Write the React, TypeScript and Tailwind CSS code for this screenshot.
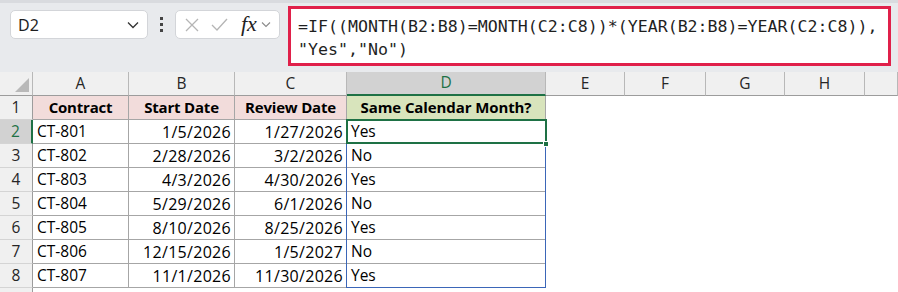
import React from "react";

const rows = [
  ["CT-801", "1/5/2026", "1/27/2026", "Yes"],
  ["CT-802", "2/28/2026", "3/2/2026", "No"],
  ["CT-803", "4/3/2026", "4/30/2026", "Yes"],
  ["CT-804", "5/29/2026", "6/1/2026", "No"],
  ["CT-805", "8/10/2026", "8/25/2026", "Yes"],
  ["CT-806", "12/15/2026", "1/5/2027", "No"],
  ["CT-807", "11/1/2026", "11/30/2026", "Yes"],
];

const cols = ["A", "B", "C", "D", "E", "F", "G", "H", ""];

const cellFont = { fontFamily: "'Open Sans', Lato, sans-serif" };

export default function App() {
  return (
    <div className="w-[898px] h-[292px] overflow-hidden bg-white relative" style={cellFont}>
      {/* Toolbar */}
      <div className="h-[72px] bg-[#e8eaed] border-t-[3px] border-[#d9dbdf] relative">
        <div className="flex items-start pt-[7px] pl-[10px]">
          {/* Name box */}
          <div className="w-[138px] h-[29px] bg-white border border-[#d3d5d9] rounded-[5px] flex items-center justify-between pl-[7px] pr-[8px]">
            <span className="text-[16px] text-[#1f1f1f]" style={{ fontFamily: "'Noto Sans', sans-serif" }}>D2</span>
            <svg width="12" height="8" viewBox="0 0 12 8"><path d="M1 1.5 L6 6.5 L11 1.5" fill="none" stroke="#333" strokeWidth="1.3" /></svg>
          </div>
          {/* dots */}
          <div className="w-[27px] h-[29px] flex flex-col items-center justify-center gap-[3px]">
            <div className="w-[3px] h-[3px] bg-[#444]" />
            <div className="w-[3px] h-[3px] bg-[#444]" />
            <div className="w-[3px] h-[3px] bg-[#444]" />
          </div>
          {/* fx box */}
          <div className="w-[105px] h-[29px] bg-white border border-[#d3d5d9] rounded-[5px] flex items-center pl-[9px]">
            <svg width="14" height="14" viewBox="0 0 14 14"><path d="M1 1 L13 13 M13 1 L1 13" stroke="#b5b5b5" strokeWidth="1.3" /></svg>
            <svg width="17" height="13" viewBox="0 0 17 13" className="ml-[12px]"><path d="M1 7 L6 12 L16 1" fill="none" stroke="#b5b5b5" strokeWidth="1.3" /></svg>
            <span className="ml-[13px] text-[22px] italic text-[#222] leading-none -mt-[2px]" style={{ fontFamily: "'Liberation Serif', serif" }}>fx</span>
            <svg width="10" height="7" viewBox="0 0 10 7" className="ml-[4px]"><path d="M1 1.5 L5 5.5 L9 1.5" fill="none" stroke="#8a8a8a" strokeWidth="1.1" /></svg>
          </div>
          {/* formula box */}
          <div className="ml-[8px] -mt-[4px] w-[603px] h-[60px] bg-white border-[3px] border-[#e0204a] pl-[7px] pt-[6px]">
            <div className="text-[16.6px] leading-[23px] text-[#1f1f1f] whitespace-pre" style={{ fontFamily: "'DejaVu Sans Mono', 'Liberation Mono', monospace" }}>
              {'=IF((MONTH(B2:B8)=MONTH(C2:C8))*(YEAR(B2:B8)=YEAR(C2:C8)),\n"Yes","No")'}
            </div>
          </div>
        </div>
      </div>

      {/* Grid */}
      <div className="grid grid-cols-[33px_96px_106px_112px_199px_79px_81px_79px_80px_1fr] relative">
        {/* header row */}
        <div className="h-[24px] bg-[#f0f0f0] border-r border-b border-r-[#b8b8b8] border-b-[#9c9c9c] relative overflow-hidden">
          <div className="absolute right-[3px] bottom-[3px] w-0 h-0 border-l-[14px] border-l-transparent border-b-[14px] border-b-[#b9b9b9]" />
        </div>
        {cols.map((c, i) =>
          c === "D" ? (
            <div key={i} className="h-[24px] bg-[#d2d2d2] border-r border-r-[#b8b8b8] border-b-2 border-b-[#1e7145] flex items-center justify-center text-[15.5px] text-[#1e7145]">
              {c}
            </div>
          ) : (
            <div key={i} className="h-[24px] bg-[#f0f0f0] border-r border-b border-r-[#b8b8b8] border-b-[#9c9c9c] flex items-center justify-center text-[15.5px] text-[#262626]">
              {c}
            </div>
          )
        )}

        {/* row 1 */}
        <div className="h-[24px] bg-[#f0f0f0] border-r border-b border-r-[#9c9c9c] border-b-[#d4d4d4] flex items-center justify-center text-[15.5px] text-[#262626]">1</div>
        {["Contract", "Start Date", "Review Date"].map((t) => (
          <div key={t} className="h-[24px] bg-[#f2dcdb] border-r border-b border-[#a6a6a6] flex items-center justify-center text-[15px] font-bold text-black tracking-[-0.2px]">{t}</div>
        ))}
        <div className="h-[24px] bg-[#d8e4bc] border-r border-b border-[#a6a6a6] flex items-center justify-center text-[15px] font-bold text-black tracking-[-0.1px]">Same Calendar Month?</div>
        {[0, 1, 2, 3, 4].map((k) => (
          <div key={k} className="h-[24px] bg-white" />
        ))}

        {rows.map((r, idx) => {
          const n = idx + 2;
          const sel = n === 2;
          return (
            <React.Fragment key={n}>
              <div
                className={
                  sel
                    ? "h-[24px] bg-[#d2d2d2] border-r-2 border-b border-r-[#1e7145] border-b-[#d4d4d4] flex items-center justify-center text-[15.5px] text-[#1e7145]"
                    : "h-[24px] bg-[#f0f0f0] border-r border-b border-r-[#9c9c9c] border-b-[#d4d4d4] flex items-center justify-center text-[15.5px] text-[#262626]"
                }
              >
                {n}
              </div>
              <div className="h-[24px] bg-white border-r border-b border-[#a6a6a6] flex items-center pl-[4px] text-[15.5px] text-black">{r[0]}</div>
              <div className="h-[24px] bg-white border-r border-b border-[#a6a6a6] flex items-center justify-end pr-[3px] text-[16px] tracking-[0.3px] text-black">{r[1]}</div>
              <div className="h-[24px] bg-white border-r border-b border-[#a6a6a6] flex items-center justify-end pr-[3px] text-[16px] tracking-[0.3px] text-black">{r[2]}</div>
              <div className="h-[24px] bg-white border-r border-b border-[#a6a6a6] flex items-center pl-[4px] text-[15.5px] text-black">{r[3]}</div>
              {[0, 1, 2, 3, 4].map((k) => (
                <div key={k} className="h-[24px] bg-white" />
              ))}
            </React.Fragment>
          );
        })}
        {/* row 9 partial */}
        <div className="h-[24px] bg-[#f0f0f0] border-r border-r-[#9c9c9c]" />

        {/* spill range border D2:D8 */}
        <div className="absolute left-[346px] top-[47px] w-[200px] h-[169px] border border-[#3b66b8] pointer-events-none" />
        {/* active cell D2 */}
        <div className="absolute left-[346px] top-[47px] w-[201px] h-[25px] border-2 border-[#1e7145] pointer-events-none" />
        <div className="absolute left-[543px] top-[69px] w-[6px] h-[6px] bg-[#1e7145] border border-white pointer-events-none" />
      </div>
    </div>
  );
}
